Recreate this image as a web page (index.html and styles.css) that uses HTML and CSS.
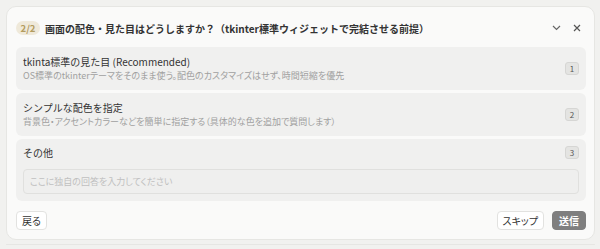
FILE: index.html
```html
<!DOCTYPE html>
<html lang="ja">
<head>
    <meta charset="UTF-8">
    <meta name="viewport" content="width=device-width, initial-scale=1.0">
    <title>質問</title>
    <link rel="stylesheet" href="styles.css">
</head>
<body>
    <div class="panel">
        <div class="header">
            <span class="step">2/2</span>
            <span class="question">画面の配色・見た目はどうしますか？（tkinter標準ウィジェットで完結させる前提）</span>
            <div class="header-icons">
                <svg width="9" height="6" viewBox="0 0 9 6"><path d="M1 1 L4.5 4.5 L8 1" fill="none" stroke="#666" stroke-width="1.2"/></svg>
                <svg width="8" height="8" viewBox="0 0 8 8"><path d="M1 1 L7 7 M7 1 L1 7" fill="none" stroke="#555" stroke-width="1.2"/></svg>
            </div>
        </div>

        <div class="options">
            <div class="option">
                <div class="option-text">
                    <div class="option-title">tkinta標準の見た目 (Recommended)</div>
                    <div class="option-desc">OS標準のtkinterテーマをそのまま使う。配色のカスタマイズはせず、時間短縮を優先</div>
                </div>
                <span class="key">1</span>
            </div>
            <div class="option">
                <div class="option-text">
                    <div class="option-title">シンプルな配色を指定</div>
                    <div class="option-desc">背景色・アクセントカラーなどを簡単に指定する（具体的な色を追加で質問します）</div>
                </div>
                <span class="key">2</span>
            </div>
            <div class="option other">
                <div class="other-row">
                    <div class="option-title">その他</div>
                    <span class="key">3</span>
                </div>
                <input class="custom" type="text" placeholder="ここに独自の回答を入力してください">
            </div>
        </div>

        <div class="footer">
            <button class="btn">戻る</button>
            <div class="footer-right">
                <button class="btn">スキップ</button>
                <button class="btn send">送信</button>
            </div>
        </div>
    </div>
    <div class="panel next"></div>
</body>
</html>
```

FILE: styles.css
```css
body {
    font-family: 'Noto Sans CJK JP', 'Noto Sans', sans-serif;
    background-color: #f1f1ef;
    color: #333;
    margin: 0;
    padding: 6px 5px 0 6px;
    height: 249px;
    overflow: hidden;
    box-sizing: border-box;
}

.panel {
    background: #fafaf9;
    border: 1px solid #e6e6e3;
    border-radius: 10px;
    padding: 14px 8px 9px 9px;
}

.panel.next {
    margin-top: 4px;
    height: 0;
    padding: 0;
    border-bottom: none;
    border-radius: 10px 10px 0 0;
}

.header {
    display: flex;
    align-items: center;
    height: 14px;
}

.step {
    background: #efe9da;
    color: #b39c5e;
    font-size: 9.5px;
    font-weight: bold;
    border-radius: 7px;
    width: 24px;
    height: 14px;
    line-height: 14px;
    text-align: center;
    margin-right: 5px;
}

.question {
    font-size: 10px;
    font-weight: bold;
    color: #333;
}

.header-icons {
    margin-left: auto;
    display: flex;
    align-items: center;
    gap: 12px;
    padding-right: 5px;
}

.options {
    margin-top: 12px;
    display: flex;
    flex-direction: column;
    gap: 3px;
}

.option {
    background: #f0f0ef;
    border-radius: 6px;
    padding: 7px;
    display: flex;
    align-items: center;
}

.option-text {
    flex: 1;
}

.option-title {
    font-size: 10px;
    line-height: 15px;
    color: #333;
}

.option-desc {
    font-size: 9px;
    line-height: 14px;
    color: #a0a0a0;
    font-feature-settings: "palt";
}

.key {
    background: #e4e4e2;
    border: 1px solid #d6d6d4;
    border-radius: 3px;
    color: #555;
    font-size: 8px;
    width: 12px;
    height: 11px;
    line-height: 11px;
    text-align: center;
}

.option.other {
    flex-direction: column;
    align-items: stretch;
    padding-top: 6px;
}

.other-row {
    display: flex;
    align-items: center;
    justify-content: space-between;
}

.custom {
    margin-top: 9px;
    height: 25px;
    box-sizing: border-box;
    border: 1px solid #e0e0de;
    border-radius: 4px;
    background: #efefee;
    font-family: inherit;
    font-size: 9px;
    padding: 0 6px;
    color: #333;
    font-feature-settings: "palt";
}

.custom::placeholder {
    color: #c0c0c0;
}

.footer {
    margin-top: 10px;
    display: flex;
    justify-content: space-between;
}

.footer-right {
    display: flex;
    gap: 8px;
}

.btn {
    font-family: inherit;
    font-size: 10px;
    height: 19px;
    padding: 0 5px;
    border: 1px solid #e2e2e0;
    border-radius: 4px;
    background: #fff;
    color: #333;
    cursor: pointer;
    font-feature-settings: "palt";
}

.btn.send {
    background: #7f7f7f;
    border-color: #7f7f7f;
    color: #fff;
    font-weight: bold;
    padding: 0 6px;
}
```
